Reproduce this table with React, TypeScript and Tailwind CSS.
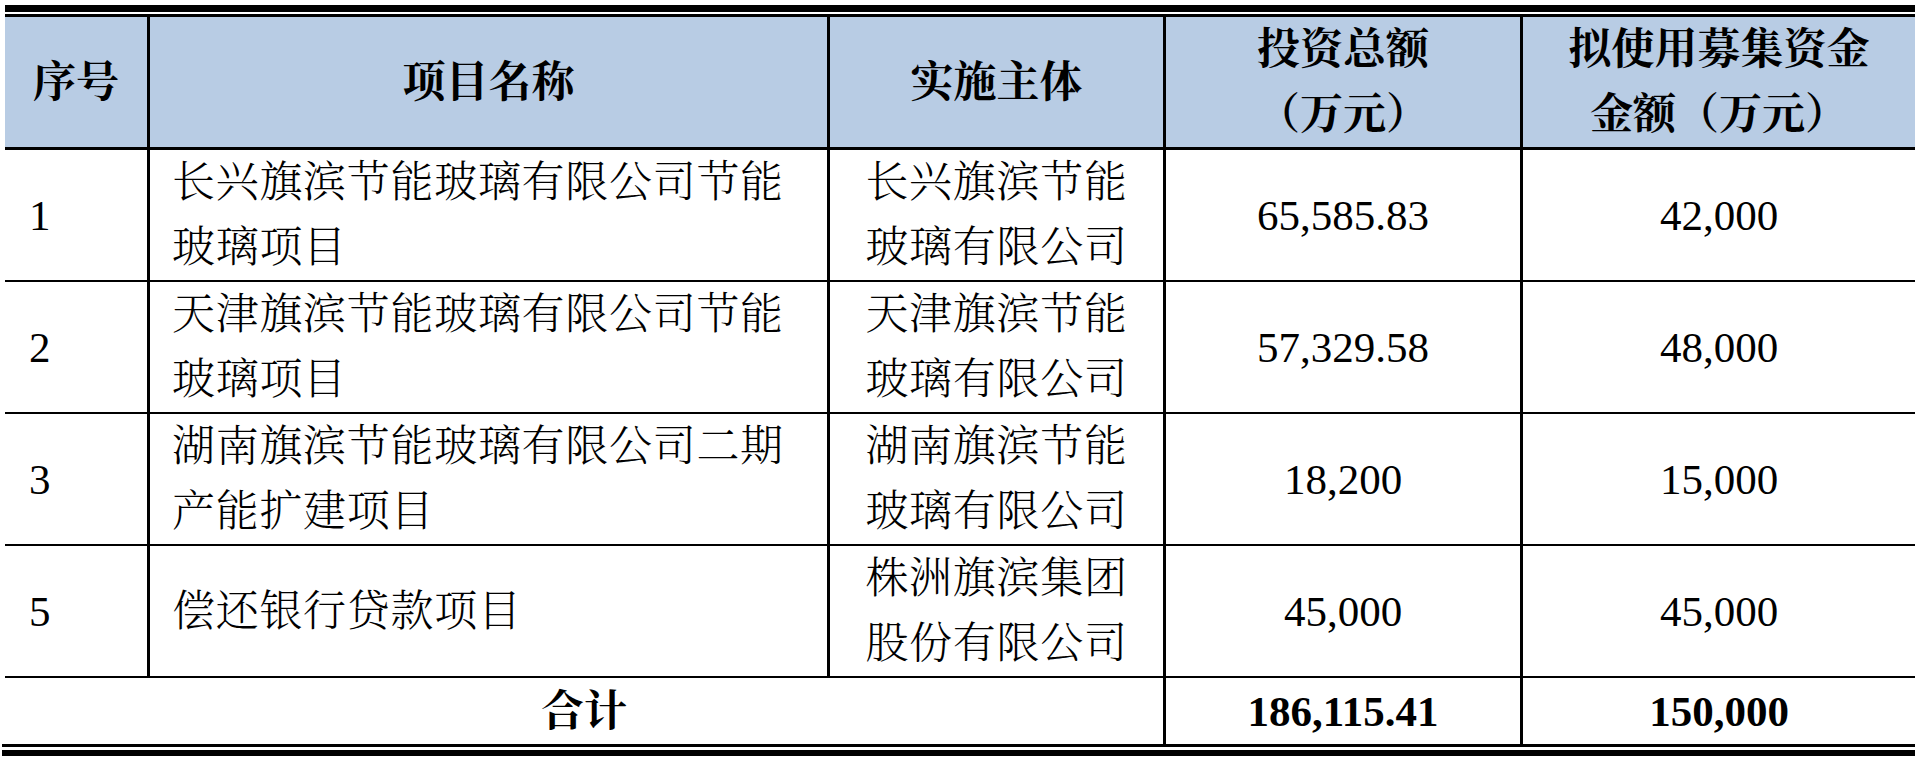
import React from "react";

const FONT = "font-['Liberation_Serif','Noto_Serif_CJK_SC','Noto_Sans_CJK_SC',serif]";

type Row = { no: string; name: string[]; org: string[]; total: string; raise: string };

const rows: Row[] = [
  {
    no: "1",
    name: ["长兴旗滨节能玻璃有限公司节能", "玻璃项目"],
    org: ["长兴旗滨节能", "玻璃有限公司"],
    total: "65,585.83",
    raise: "42,000",
  },
  {
    no: "2",
    name: ["天津旗滨节能玻璃有限公司节能", "玻璃项目"],
    org: ["天津旗滨节能", "玻璃有限公司"],
    total: "57,329.58",
    raise: "48,000",
  },
  {
    no: "3",
    name: ["湖南旗滨节能玻璃有限公司二期", "产能扩建项目"],
    org: ["湖南旗滨节能", "玻璃有限公司"],
    total: "18,200",
    raise: "15,000",
  },
  {
    no: "5",
    name: ["偿还银行贷款项目"],
    org: ["株洲旗滨集团", "股份有限公司"],
    total: "45,000",
    raise: "45,000",
  },
];

function Lines({ lines }: { lines: string[] }) {
  return (
    <div className="flex flex-col">
      {lines.map((l, i) => (
        <span key={i} className="block whitespace-nowrap">
          {l}
        </span>
      ))}
    </div>
  );
}

export default function App() {
  const head =
    "h-[133px] bg-[#b8cce4] border-b-[3px] border-black flex items-center justify-center text-center font-bold";
  const body = "h-[132px] border-b-2 border-black flex items-center";
  return (
    <div className={`w-[1920px] h-[760px] bg-white text-black ${FONT} text-[43px] leading-[65px]`}>
      <div className="pt-[5px] pl-[5px]">
        <div className="w-[1910px]">
          <div className="h-[7px] bg-black" />
          <div className="h-[2px]" />
          <div className="h-[3px] bg-black" />
          <div className="grid grid-cols-[142px_680px_336px_357px_395px]">
            {/* header */}
            <div className={head}>序号</div>
            <div className={`${head} border-l-[3px]`}>项目名称</div>
            <div className={`${head} border-l-[3px]`}>实施主体</div>
            <div className={`${head} border-l-[3px]`}>
              <Lines lines={["投资总额", "（万元）"]} />
            </div>
            <div className={`${head} border-l-[3px]`}>
              <Lines lines={["拟使用募集资金", "金额（万元）"]} />
            </div>

            {rows.map((r) => (
              <React.Fragment key={r.no}>
                <div className={`${body} pl-[24px]`}>{r.no}</div>
                <div className={`${body} border-l-[3px] pl-[22px] font-light tracking-[0.7px]`}>
                  <Lines lines={r.name} />
                </div>
                <div className={`${body} border-l-[3px] justify-center font-light tracking-[0.7px]`}>
                  <Lines lines={r.org} />
                </div>
                <div className={`${body} border-l-[3px] justify-center`}>{r.total}</div>
                <div className={`${body} border-l-[3px] justify-center`}>{r.raise}</div>
              </React.Fragment>
            ))}

            {/* total */}
            <div className="col-span-3 h-[66px] flex items-center justify-center font-bold">合计</div>
            <div className="h-[66px] border-l-[3px] border-black flex items-center justify-center font-bold">
              186,115.41
            </div>
            <div className="h-[66px] border-l-[3px] border-black flex items-center justify-center font-bold">
              150,000
            </div>
          </div>
          <div className="-ml-[3px] w-[1913px]">
            <div className="h-[3px] bg-black" />
            <div className="h-[3px]" />
            <div className="h-[6px] bg-black" />
          </div>
        </div>
      </div>
    </div>
  );
}
